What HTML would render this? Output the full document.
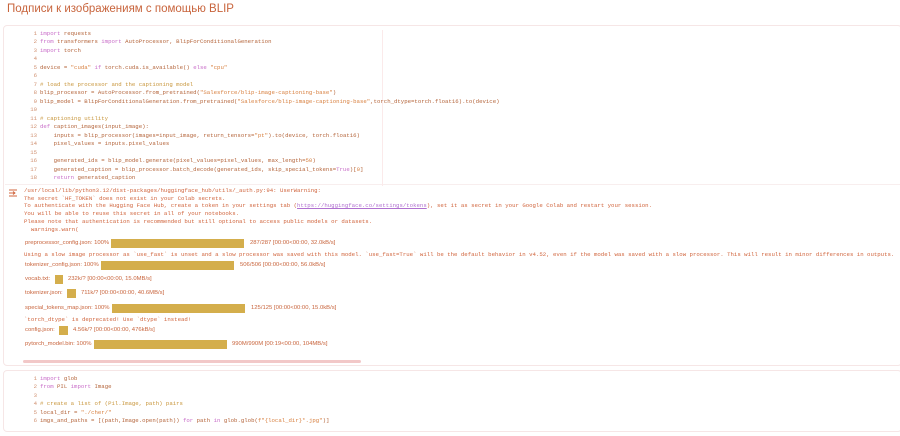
<!DOCTYPE html>
<html><head><meta charset="utf-8"><style>
body{margin:0;width:900px;height:436px;background:#fff;position:relative;overflow:hidden;font-family:"Liberation Sans",sans-serif}
.t{position:absolute;left:7px;top:3px;font-size:11.5px;color:#c8643c}
.cell{position:absolute;left:3px;right:-2px;border:1px solid #f6e6e6;border-radius:4px;background:#fff}
.code{position:absolute;left:0;font-family:"Liberation Mono",monospace;font-size:5.68px;line-height:8.47px;white-space:pre;color:#b4643a}
.n{display:inline-block;width:37px;text-align:right;padding-right:3px;color:#d09070}
.k{color:#c86cc8}.s{color:#d88040}.c{color:#c8963c}
.o{position:absolute;left:24px;font-family:"Liberation Mono",monospace;font-size:5.7px;line-height:7.7px;white-space:pre;color:#d0643c}
.u{color:#b070d0;text-decoration:underline}
.p{position:absolute;left:25px;font-size:5.9px;color:#c8643c;white-space:pre;height:9px;line-height:9px}
.bar{position:absolute;height:9px;background:#d4ae4c;top:0}
</style></head><body>
<div class="t">Подписи к изображениям с помощью BLIP</div>
<div class="cell" style="top:25px;height:339px"></div>
<div style="position:absolute;left:5px;right:0;top:184px;height:1px;background:#f8eeee"></div>
<div style="position:absolute;left:382px;top:30px;width:1px;height:156px;background:#fbeaea"></div>
<div class="code" style="top:30px"><span class="n">1</span><span class="k">import</span> requests
<span class="n">2</span><span class="k">from</span> transformers <span class="k">import</span> AutoProcessor, BlipForConditionalGeneration
<span class="n">3</span><span class="k">import</span> torch
<span class="n">4</span>
<span class="n">5</span>device = <span class="s">"cuda"</span> <span class="k">if</span> torch.cuda.is_available() <span class="k">else</span> <span class="s">"cpu"</span>
<span class="n">6</span>
<span class="n">7</span><span class="c"># load the processor and the captioning model</span>
<span class="n">8</span>blip_processor = AutoProcessor.from_pretrained(<span class="s">"Salesforce/blip-image-captioning-base"</span>)
<span class="n">9</span>blip_model = BlipForConditionalGeneration.from_pretrained(<span class="s">"Salesforce/blip-image-captioning-base"</span>,torch_dtype=torch.float16).to(device)
<span class="n">10</span>
<span class="n">11</span><span class="c"># captioning utility</span>
<span class="n">12</span><span class="k">def</span> caption_images(input_image):
<span class="n">13</span>    inputs = blip_processor(images=input_image, return_tensors=<span class="s">"pt"</span>).to(device, torch.float16)
<span class="n">14</span>    pixel_values = inputs.pixel_values
<span class="n">15</span>
<span class="n">16</span>    generated_ids = blip_model.generate(pixel_values=pixel_values, max_length=<span class="s">50</span>)
<span class="n">17</span>    generated_caption = blip_processor.batch_decode(generated_ids, skip_special_tokens=<span class="k">True</span>)[<span class="s">0</span>]
<span class="n">18</span>    <span class="k">return</span> generated_caption</div>
<svg style="position:absolute;left:8px;top:189px" width="10" height="9" viewBox="0 0 10 9"><path d="M1 1H9M1 4H4M1 7H9M5 2.5L7 4L5 5.5M3 4H7" stroke="#d0643c" stroke-width="0.9" fill="none"/></svg>
<div class="o" style="top:187px">/usr/local/lib/python3.12/dist-packages/huggingface_hub/utils/_auth.py:94: UserWarning: 
The secret `HF_TOKEN` does not exist in your Colab secrets.
To authenticate with the Hugging Face Hub, create a token in your settings tab (<span class="u">https://huggingface.co/settings/tokens</span>), set it as secret in your Google Colab and restart your session.
You will be able to reuse this secret in all of your notebooks.
Please note that authentication is recommended but still optional to access public models or datasets.
  warnings.warn(</div>
<div class="p" style="top:239px">preprocessor_config.json: 100%<div class="bar" style="left:86px;width:133px"></div><span style="position:absolute;left:225px">287/287 [00:00&lt;00:00, 32.0kB/s]</span></div>
<div class="o" style="top:251px">Using a slow image processor as `use_fast` is unset and a slow processor was saved with this model. `use_fast=True` will be the default behavior in v4.52, even if the model was saved with a slow processor. This will result in minor differences in outputs.</div>
<div class="p" style="top:261px">tokenizer_config.json: 100%<div class="bar" style="left:76px;width:133px"></div><span style="position:absolute;left:215px">506/506 [00:00&lt;00:00, 56.0kB/s]</span></div>
<div class="p" style="top:275px">vocab.txt:<div class="bar" style="left:30px;width:8px"></div><span style="position:absolute;left:43px">232k/? [00:00&lt;00:00, 15.0MB/s]</span></div>
<div class="p" style="top:289px">tokenizer.json:<div class="bar" style="left:42px;width:9px"></div><span style="position:absolute;left:56px">711k/? [00:00&lt;00:00, 40.6MB/s]</span></div>
<div class="p" style="top:304px">special_tokens_map.json: 100%<div class="bar" style="left:87px;width:133px"></div><span style="position:absolute;left:226px">125/125 [00:00&lt;00:00, 15.0kB/s]</span></div>
<div class="o" style="top:316px">`torch_dtype` is deprecated! Use `dtype` instead!</div>
<div class="p" style="top:326px">config.json:<div class="bar" style="left:34px;width:9px"></div><span style="position:absolute;left:48px">4.56k/? [00:00&lt;00:00, 476kB/s]</span></div>
<div class="p" style="top:340px">pytorch_model.bin: 100%<div class="bar" style="left:69px;width:133px"></div><span style="position:absolute;left:207px">990M/990M [00:19&lt;00:00, 104MB/s]</span></div>
<div style="position:absolute;left:23px;top:360px;width:338px;height:3px;background:#f2c8c8;border-radius:2px"></div>
<div class="cell" style="top:370px;height:60px"></div>
<div class="code" style="top:375px"><span class="n">1</span><span class="k">import</span> glob
<span class="n">2</span><span class="k">from</span> PIL <span class="k">import</span> Image
<span class="n">3</span>
<span class="n">4</span><span class="c"># create a list of (Pil.Image, path) pairs</span>
<span class="n">5</span>local_dir = <span class="s">"./cher/"</span>
<span class="n">6</span>imgs_and_paths = [(path,Image.open(path)) <span class="k">for</span> path <span class="k">in</span> glob.glob(<span class="s">f"{local_dir}*.jpg"</span>)]</div>
</body></html>
